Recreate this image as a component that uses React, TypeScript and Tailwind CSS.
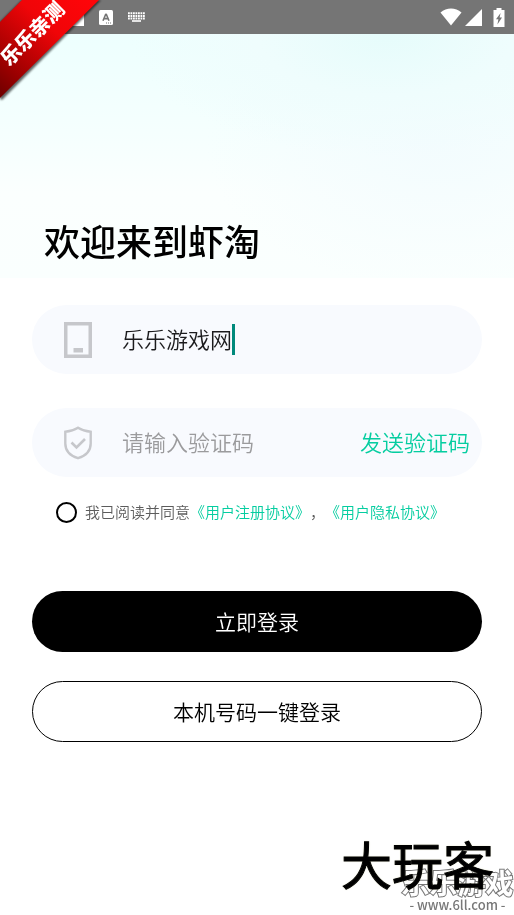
import React, { useState } from 'react';

const PhoneIcon = () => (
  <svg viewBox="0 0 28 36" className="w-7 h-9 shrink-0" fill="none" aria-hidden="true">
    <rect x="1.75" y="1.75" width="24.5" height="32.5" stroke="#c6c7cb" strokeWidth="3.5" />
    <rect x="9.5" y="26" width="9.5" height="4.5" fill="#c6c7cb" />
  </svg>
);

const ShieldIcon = () => (
  <svg viewBox="0 0 28 34" className="w-7 h-[34px] shrink-0" fill="none" stroke="#c6c7cb" aria-hidden="true">
    <path
      d="M14 1.8C10.6 4 6.2 5.4 1.3 5.8V17.5C1.3 24.8 6.3 29.8 14 32.2C21.7 29.8 26.7 24.8 26.7 17.5V5.8C21.8 5.4 17.4 4 14 1.8Z"
      strokeWidth="2.4"
    />
    <path d="M7.5 16.5L12.5 21.5L21 13" strokeWidth="2.6" />
  </svg>
);

const StatusBar = () => (
  <div className="flex items-center justify-between h-[34px] pl-[73px] pr-[9px] bg-[#757575]">
    <div className="flex items-center gap-[15px]">
      <svg viewBox="0 0 11 18" className="w-[11px] h-[18px]" aria-hidden="true">
        <path d="M0 0H11V18H0Z" fill="#fff" />
      </svg>
      <svg viewBox="0 0 14 15" className="w-[14px] h-[15px]" aria-hidden="true">
        <rect width="14" height="15" rx="1.5" fill="#fff" />
        <path
          d="M4 10.8L6.7 4.2H7.3L10 10.8M5 8.6H9"
          fill="none"
          stroke="#757575"
          strokeWidth="1.6"
          strokeLinejoin="bevel"
        />
        <path d="M7 13H13" stroke="#757575" strokeWidth="1" strokeDasharray="1 1" />
      </svg>
      <svg viewBox="0 0 17 10" className="w-[17px] h-[10px]" stroke="#fff" aria-hidden="true">
        <path d="M0 1.2H17M0 4H17M0 6.6H17" strokeWidth="2" strokeDasharray="1.8 0.7" />
        <path d="M4 9H13" strokeWidth="1.6" />
      </svg>
    </div>
    <div className="flex items-center">
      <svg viewBox="0 0 22 18" className="w-[22px] h-[18px] mr-[3px]" fill="#fff" aria-hidden="true">
        <path d="M0.5 4.5C6.5 -0.7 15.5 -0.7 21.5 4.5L11 17.5Z" />
      </svg>
      <svg viewBox="0 0 17 17" className="w-[17px] h-[17px] mr-[11px]" fill="#fff" aria-hidden="true">
        <path d="M17 0V17H0Z" />
      </svg>
      <svg viewBox="0 0 12 19" className="w-3 h-[19px]" aria-hidden="true">
        <path d="M3.5 0H8.5V2H11.5V19H0.5V2H3.5Z" fill="#fff" />
        <path d="M7.6 5L3 11.2H5.4L4.4 16.4L9 9.6H6.6Z" fill="#757575" />
      </svg>
    </div>
  </div>
);

const Ribbon = () => (
  <div className="absolute top-0 left-0 w-[104px] h-[104px] overflow-hidden">
    <svg viewBox="0 0 104 104" className="w-full h-full" aria-hidden="true">
      <defs>
        <linearGradient id="ribbon" x1="0" y1="1" x2="0.9" y2="0">
          <stop offset="0" stopColor="#6d0000" />
          <stop offset="0.2" stopColor="#980000" />
          <stop offset="0.65" stopColor="#f00508" />
          <stop offset="1" stopColor="#ff0509" />
        </linearGradient>
        <filter id="ribbon-shadow">
          <feGaussianBlur stdDeviation="1" />
        </filter>
      </defs>
      <path d="M22 0H101L2 100L0 99V22Z" fill="#000" opacity="0.6" filter="url(#ribbon-shadow)" />
      <path d="M22 0H99L0 98V22Z" fill="url(#ribbon)" />
    </svg>
    <span className="absolute top-[18px] -left-[8px] w-20 text-center text-[20px] leading-[30px] font-black text-white whitespace-nowrap -rotate-45">
      乐乐亲测
    </span>
  </div>
);

const Watermark = () => (
  <footer className="relative self-end mt-auto w-[173px] h-[78px]">
    <p className="text-[51px] leading-[52px] font-normal text-black [-webkit-text-stroke:1px_#000000] [text-shadow:0_0_2px_#d8d8a8]">
      大玩客
    </p>
    <div className="absolute right-0 bottom-0 w-[113px] pb-0.5 text-center mix-blend-multiply">
      <p className="text-[28px] leading-[30px] font-bold whitespace-nowrap text-white [paint-order:stroke] [-webkit-text-stroke:2px_#777777]">
        乐乐游戏
      </p>
      <p className="h-4 text-[13px] leading-4 font-medium whitespace-nowrap text-[#777777]">- www.6ll.com -</p>
    </div>
  </footer>
);

const App = () => {
  const [account, setAccount] = useState('乐乐游戏网');
  const [code, setCode] = useState('');
  const [agreed, setAgreed] = useState(false);

  return (
    <div className="relative flex flex-col min-h-screen bg-white text-black font-[350] font-['Noto_Sans_CJK_SC',sans-serif]">
      <StatusBar />
      <Ribbon />

      {/* Welcome banner */}
      <header className="flex items-end h-[244px] px-11 pb-[14px] bg-[radial-gradient(ellipse_50%_50%_at_75%_0%,#e6fcfb_0%,#effdfd_50%,transparent_100%),radial-gradient(ellipse_45%_60%_at_85%_45%,#f3fcfe_0%,transparent_100%),linear-gradient(to_bottom,#edfffe,#f6fffe_45%,#fbfffe_65%,#fafffe)]">
        <h1 className="text-[36px] leading-[48px] font-medium">欢迎来到虾淘</h1>
      </header>

      <form className="flex flex-col px-8 pt-[27px]" onSubmit={(e) => e.preventDefault()}>
        {/* Fields */}
        <div className="flex flex-col gap-[34px]">
          <label className="flex items-center h-[69px] pl-8 pr-3 rounded-full bg-[#f8fafe]">
            <PhoneIcon />
            <input
              type="text"
              aria-label="账号"
              value={account}
              onChange={(e) => setAccount(e.target.value)}
              className="ml-[30px] pb-1 field-sizing-content text-[22px] leading-8 text-[#1b1b1d] outline-none caret-transparent"
            />
            <span className="w-[3px] h-[31px] bg-[#00897b]" />
          </label>
          <div className="flex items-center h-[69px] pl-8 pr-3 rounded-full bg-[#f8fafe]">
            <ShieldIcon />
            <input
              type="text"
              aria-label="验证码"
              placeholder="请输入验证码"
              value={code}
              onChange={(e) => setCode(e.target.value)}
              className="flex-1 min-w-0 ml-[30px] pb-1 text-[22px] leading-8 outline-none placeholder:text-[#9b9b9d]"
            />
            <button type="button" className="pb-1 text-[22px] leading-8 text-[#05cda0]">
              发送验证码
            </button>
          </div>
        </div>

        {/* Agreement */}
        <div className="flex items-center h-6 mt-[23px] pl-6 text-[15px] text-[#5c5c5c] whitespace-nowrap">
          <input
            id="agree"
            type="checkbox"
            checked={agreed}
            onChange={(e) => setAgreed(e.target.checked)}
            className="appearance-none w-[21px] h-[21px] mr-2 rounded-full border-2 border-black checked:bg-black"
          />
          <label htmlFor="agree">我已阅读并同意</label>
          <a href="#register" className="text-[#05cda0]">《用户注册协议》</a>
          <span>，</span>
          <a href="#privacy" className="text-[#05cda0]">《用户隐私协议》</a>
        </div>

        {/* Actions */}
        <div className="flex flex-col gap-[29px] mt-[67px]">
          <button type="submit" className="h-[61px] rounded-full bg-black text-[21px] text-white">
            立即登录
          </button>
          <button type="button" className="h-[61px] rounded-full border border-black text-[21px]">
            本机号码一键登录
          </button>
        </div>
      </form>

      <Watermark />
    </div>
  );
};

export default App;
